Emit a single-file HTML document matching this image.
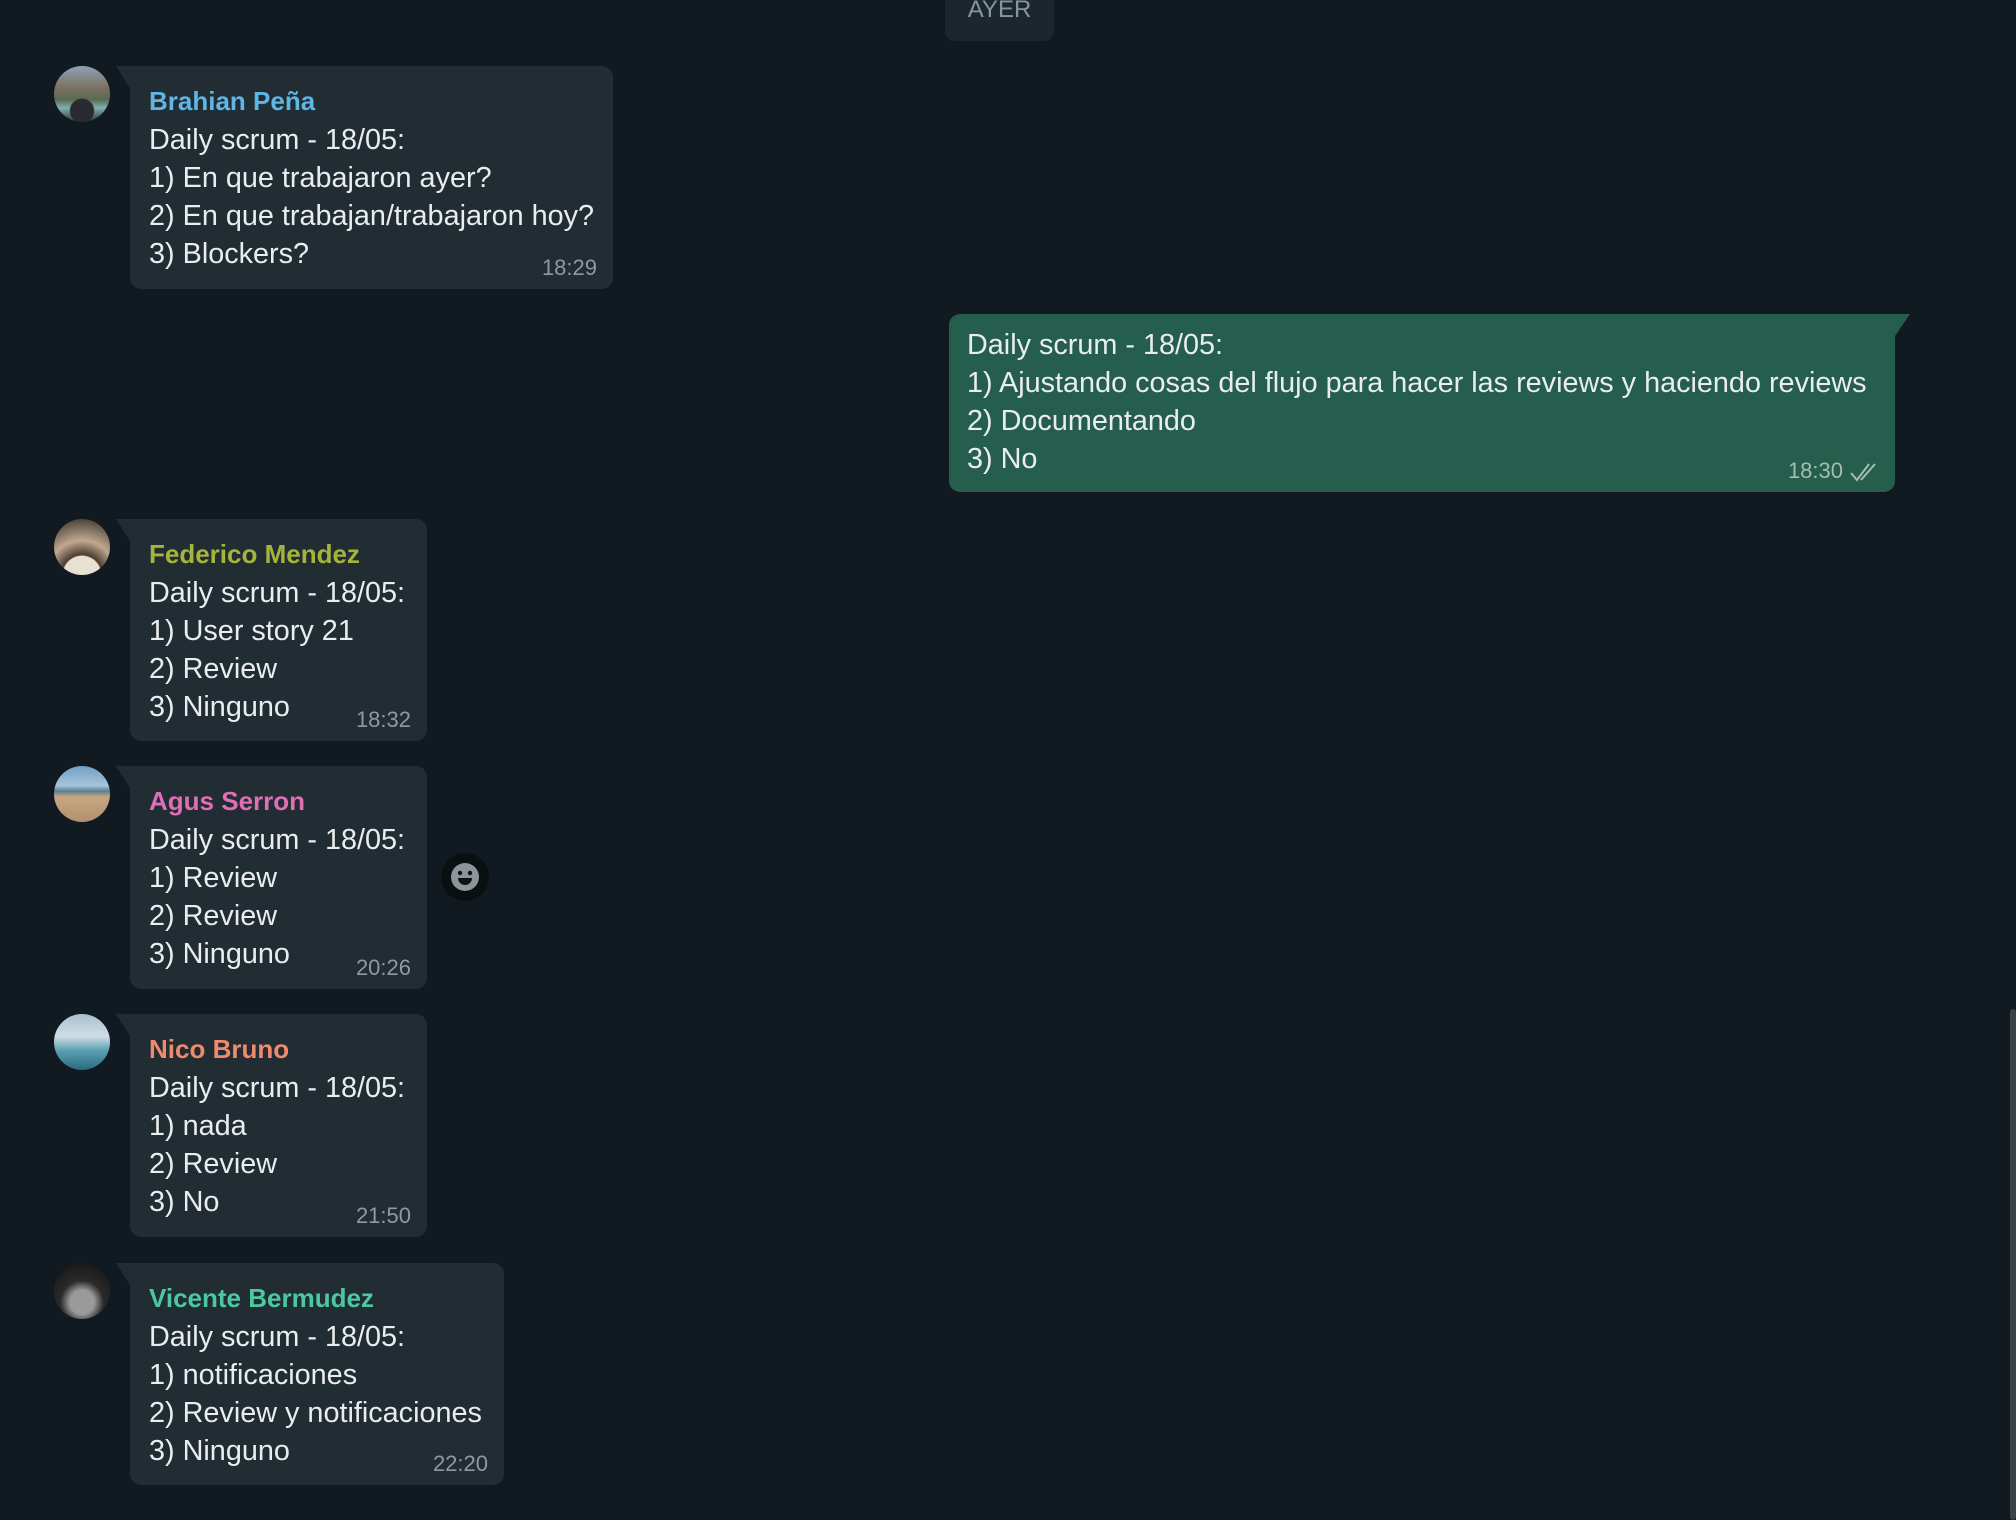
<!DOCTYPE html>
<html><head><meta charset="utf-8"><style>
*{margin:0;padding:0;box-sizing:border-box}
body{width:2016px;height:1520px;background:#111a20;overflow:hidden;position:relative;font-family:"Liberation Sans",sans-serif;color:#e9edef}
.pill{position:absolute;left:945px;top:-10px;width:109px;height:51px;background:#1c262d;border-radius:10px;color:#8696a0;font-size:24px;text-align:center;line-height:40px;padding-top:0}
.b{position:absolute;background:#212c33;border-radius:0 11px 11px 11px}
.b:before{content:"";position:absolute;left:-14px;top:0;border-top:22px solid #212c33;border-left:14px solid transparent}
.o{position:absolute;background:#255e4c;border-radius:11px 0 11px 11px}
.o:after{content:"";position:absolute;right:-15px;top:0;border-top:22px solid #255e4c;border-right:15px solid transparent}
.n{position:absolute;left:19px;top:20px;font-size:26px;font-weight:bold;white-space:nowrap}
.t{position:absolute;left:19px;font-size:28.8px;line-height:38px;white-space:nowrap}
.tm{position:absolute;right:16px;bottom:8px;font-size:22px;color:#8e9aa1}
.av{position:absolute;left:54px;width:56px;height:56px;border-radius:50%}
</style></head><body>
<div class="pill">AYER</div>

<div class="av" style="top:66px;background:radial-gradient(circle at 50% 80%,#2a2a30 0 22%,transparent 24%),linear-gradient(#8fa2b5 0,#7a7060 40%,#5a6a50 60%,#7fb0b0 75%,#303030 100%)"></div>
<div class="b" style="left:130px;top:66px;width:483px;height:223px">
<div class="n" style="color:#5fb6e4">Brahian Peña</div>
<div class="t" style="top:55px">Daily scrum - 18/05:<br>1) En que trabajaron ayer?<br>2) En que trabajan/trabajaron hoy?<br>3) Blockers?</div>
<div class="tm">18:29</div></div>

<div class="o" style="left:949px;top:314px;width:946px;height:178px">
<div class="t" style="left:18px;top:12px">Daily scrum - 18/05:<br>1) Ajustando cosas del flujo para hacer las reviews y haciendo reviews<br>2) Documentando<br>3) No</div>
<div class="tm" style="right:52px;color:#a4bdb3">18:30</div>
<svg style="position:absolute;right:14px;bottom:10px" width="32" height="20" viewBox="0 0 32 20"><path d="M2 11l6 7L20 2M12 18L26 2" stroke="#a4bdb3" stroke-width="2" fill="none"/></svg>
</div>

<div class="av" style="top:519px;background:radial-gradient(circle at 50% 100%,#e8e0d0 0 30%,#4a3a30 32%,#c0a890 55%,#2a2520 100%)"></div>
<div class="b" style="left:130px;top:519px;width:297px;height:222px">
<div class="n" style="color:#a5b43a">Federico Mendez</div>
<div class="t" style="top:55px">Daily scrum - 18/05:<br>1) User story 21<br>2) Review<br>3) Ninguno</div>
<div class="tm">18:32</div></div>

<div class="av" style="top:766px;background:linear-gradient(#6fa0c8 0,#a8c4d8 35%,#5a7f95 45%,#c8a680 55%,#b09070 100%)"></div>
<div class="b" style="left:130px;top:766px;width:297px;height:223px">
<div class="n" style="color:#df6eb5">Agus Serron</div>
<div class="t" style="top:55px">Daily scrum - 18/05:<br>1) Review<br>2) Review<br>3) Ninguno</div>
<div class="tm">20:26</div></div>
<div style="position:absolute;left:441px;top:853px;width:48px;height:48px;border-radius:50%;background:#0a0f12"></div>
<svg style="position:absolute;left:450px;top:862px" width="30" height="30" viewBox="0 0 30 30"><circle cx="15" cy="15" r="14" fill="#8e959a"/><circle cx="10" cy="11" r="2.2" fill="#111"/><circle cx="20" cy="11" r="2.2" fill="#111"/><path d="M8 16h14a7 7 0 0 1-14 0z" fill="#111"/></svg>

<div class="av" style="top:1014px;background:linear-gradient(#a8c0d0 0,#d0dde5 40%,#5aa0b0 65%,#2a6a80 100%)"></div>
<div class="b" style="left:130px;top:1014px;width:297px;height:223px">
<div class="n" style="color:#f08a6c">Nico Bruno</div>
<div class="t" style="top:55px">Daily scrum - 18/05:<br>1) nada<br>2) Review<br>3) No</div>
<div class="tm">21:50</div></div>

<div class="av" style="top:1263px;background:radial-gradient(circle at 50% 70%,#9a9a9a 0 25%,#2a2a2a 45%,#111 100%)"></div>
<div class="b" style="left:130px;top:1263px;width:374px;height:222px">
<div class="n" style="color:#4cc89f">Vicente Bermudez</div>
<div class="t" style="top:55px">Daily scrum - 18/05:<br>1) notificaciones<br>2) Review y notificaciones<br>3) Ninguno</div>
<div class="tm">22:20</div></div>

<div style="position:absolute;left:2010px;top:1009px;width:6px;height:511px;background:#3a4247;border-radius:3px"></div>
</body></html>
